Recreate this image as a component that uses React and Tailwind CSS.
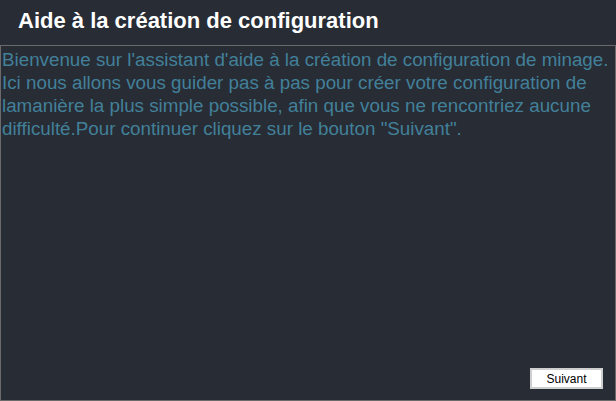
export default function App() {
  return (
    <div className="w-[616px] h-[401px] bg-[#282c34] flex flex-col overflow-hidden" style={{ fontFamily: '"Liberation Sans", Arial, sans-serif' }}>
      <div className="h-[45px] shrink-0 pl-[18px] pt-[8px]">
        <h1 className="text-[22px] font-bold text-white leading-[26px]">Aide à la création de configuration</h1>
      </div>
      <div className="flex-1 border border-[#6a6a6a] flex flex-col">
        <p className="pl-[1px] pt-[2px] text-[18.8px] leading-[23px] text-[#42809a] whitespace-nowrap">
          Bienvenue sur l'assistant d'aide à la création de configuration de minage.
          <br />
          Ici nous allons vous guider pas à pas pour créer votre configuration de
          <br />
          lamanière la plus simple possible, afin que vous ne rencontriez aucune
          <br />
          difficulté.Pour continuer cliquez sur le bouton "Suivant".
        </p>
        <div className="flex-1" />
        <div className="flex justify-end pr-[12px] pb-[11px]">
          <button className="w-[73px] h-[21px] bg-white border-2 border-[#cfcfcf] text-[12px] text-black leading-none">
            Suivant
          </button>
        </div>
      </div>
    </div>
  );
}
